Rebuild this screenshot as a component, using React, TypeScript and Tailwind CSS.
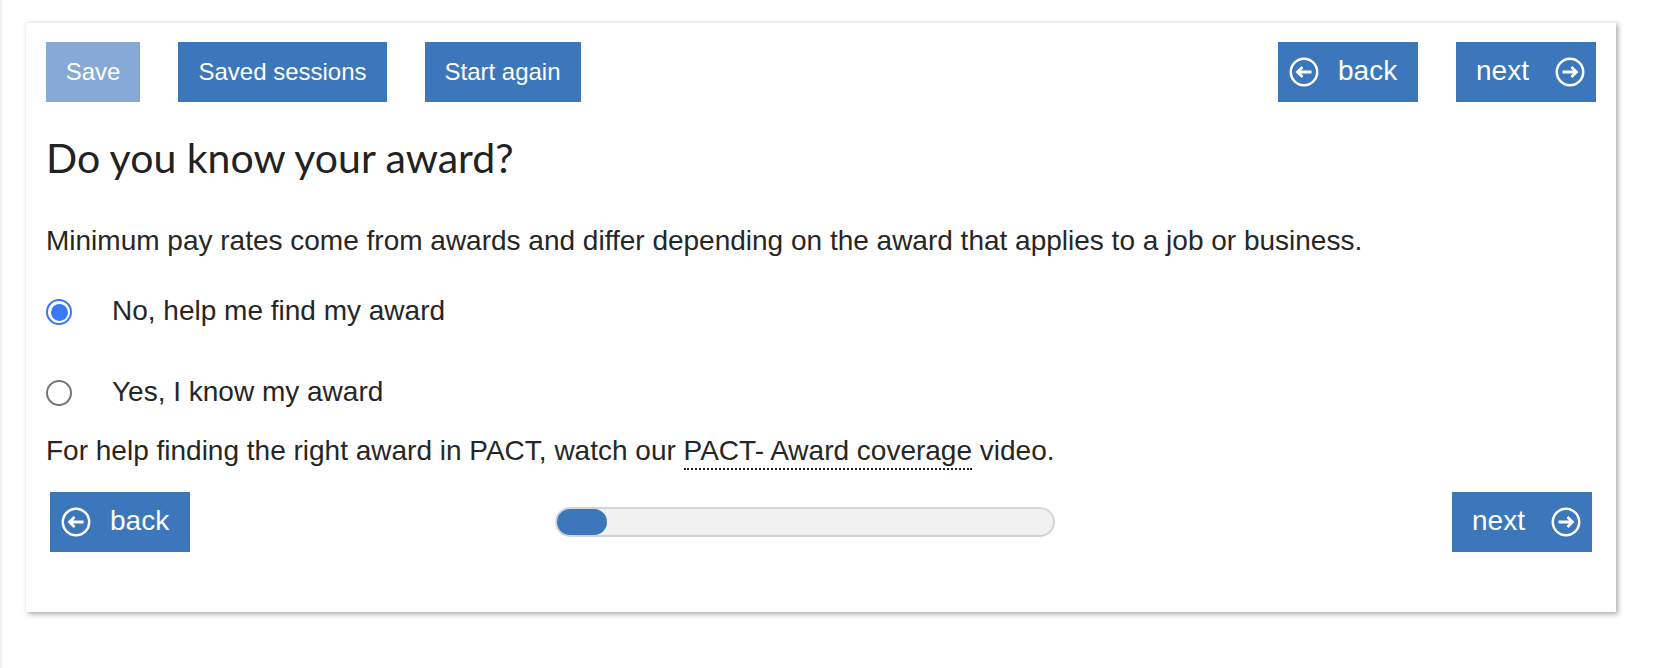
import React from "react";

const NavIcon = ({ dir }: { dir: "left" | "right" }) => (
  <svg width="30" height="30" viewBox="0 0 30 30" fill="none" stroke="white" className="shrink-0">
    <circle cx="15" cy="15" r="13.2" strokeWidth="2.5" />
    {dir === "left" ? (
      <path d="M22.5 15H9M13.5 10L8.5 15L13.5 20" strokeWidth="2.8" />
    ) : (
      <path d="M7.5 15H21M16.5 10L21.5 15L16.5 20" strokeWidth="2.8" />
    )}
  </svg>
);

const Btn = ({ children, className = "" }: { children: React.ReactNode; className?: string }) => (
  <button className={`h-[60px] bg-[#3c76bb] text-white text-[24px] font-['Liberation_Sans',sans-serif] ${className}`}>
    {children}
  </button>
);

const Back = () => (
  <Btn className="w-[140px] flex items-center pl-[11px]">
    <NavIcon dir="left" />
    <span className="ml-[19px] mb-[2px] text-[28px]">back</span>
  </Btn>
);

const Next = () => (
  <Btn className="w-[140px] flex items-center pl-[20px]">
    <span className="mb-[2px] text-[28px]">next</span>
    <span className="ml-[26px] flex"><NavIcon dir="right" /></span>
  </Btn>
);

export default function App() {
  return (
    <div className="flex h-[668px] overflow-hidden bg-white font-['Liberation_Sans',sans-serif] text-[#262626]">
      <div className="w-[2px] bg-[#f0f0f0]" />
      <div className="ml-[24px] mt-[22px] h-[590px] w-[1590px] border-t border-[#eeeeee] bg-white pl-[20px] pr-[20px] pt-[19px] shadow-[2px_2px_5px_rgba(0,0,0,0.35)]">
        <div className="flex">
          <Btn className="w-[94px] !bg-[#87a9d5]">Save</Btn>
          <Btn className="ml-[38px] w-[209px]">Saved sessions</Btn>
          <Btn className="ml-[38px] w-[156px] pr-[1px]">Start again</Btn>
          <div className="ml-auto flex gap-[38px]">
            <Back />
            <Next />
          </div>
        </div>
        <h1 className="mt-[32px] font-['Lato',sans-serif] text-[41px] leading-[48px] text-[#222]">Do you know your award?</h1>
        <p className="mt-[41px] text-[28px] leading-[36px]">
          Minimum pay rates come from awards and differ depending on the award that applies to a job or business.
        </p>
        <div className="mt-[35px] flex h-[36px] items-center">
          <span className="flex h-[26px] w-[26px] items-center justify-center rounded-full border-2 border-[#3b78f5] bg-white">
            <span className="h-[17px] w-[17px] rounded-full bg-[#3b78f5]" />
          </span>
          <span className="ml-[40px] mb-[2px] text-[28px]">No, help me find my award</span>
        </div>
        <div className="mt-[45px] flex h-[36px] items-center">
          <span className="h-[26px] w-[26px] rounded-full border-2 border-[#767676] bg-white" />
          <span className="ml-[40px] mb-[2px] text-[28px]">Yes, I know my award</span>
        </div>
        <p className="mt-[22px] text-[28px] leading-[36px]">
          For help finding the right award in PACT, watch our{" "}
          <span className="border-b-2 border-dotted border-[#222] pb-[2px]">PACT- Award coverage</span> video.
        </p>
        <div className="mt-[23px] flex items-center px-[4px]">
          <Back />
          <div className="ml-[365px] h-[30px] w-[500px] rounded-full border-2 border-[#d4d4d4] bg-[#f1f1f1]">
            <div className="h-full w-[50px] rounded-full bg-[#3c76bb]" />
          </div>
          <div className="ml-auto">
            <Next />
          </div>
        </div>
      </div>
    </div>
  );
}
